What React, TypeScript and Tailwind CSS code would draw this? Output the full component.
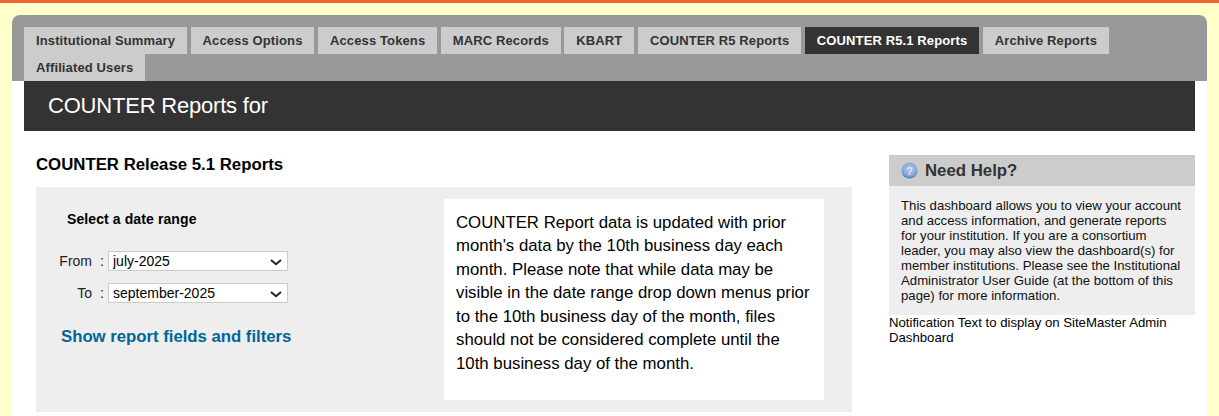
const sans = "font-['Liberation_Sans',Arial,sans-serif]";

const tabs = [
  "Institutional Summary",
  "Access Options",
  "Access Tokens",
  "MARC Records",
  "KBART",
  "COUNTER R5 Reports",
  "COUNTER R5.1 Reports",
  "Archive Reports",
  "Affiliated Users",
];

function HelpIcon() {
  return (
    <svg width="17" height="17" viewBox="0 0 17 17">
      <defs>
        <radialGradient id="helpBall" cx="50%" cy="40%" r="60%">
          <stop offset="0%" stopColor="#a9c2e6" />
          <stop offset="70%" stopColor="#8dabd8" />
          <stop offset="100%" stopColor="#4a78bb" />
        </radialGradient>
      </defs>
      <circle cx="8.5" cy="8.5" r="8" fill="url(#helpBall)" />
      <text x="8.5" y="12.5" textAnchor="middle" fontSize="11" fontWeight="700" fill="#dfe7f3" fontFamily="Liberation Sans">
        ?
      </text>
    </svg>
  );
}

function DateRow({ label, value, options }: { label: string; value: string; options: string[] }) {
  return (
    <div className="flex items-center h-[20px]">
      <span className="w-[56px] text-right text-[14px] text-[#222]">{label}</span>
      <span className="w-[16px] pl-[8px] text-[14px] text-[#222]">:</span>
      <div className="relative w-[180px] h-[20px]">
        <select
          defaultValue={value}
          className="block appearance-none w-full h-full bg-white border border-[#ccc] pl-[4px] text-[14px] leading-[18px] text-black"
        >
          {options.map((o) => (
            <option key={o}>{o}</option>
          ))}
        </select>
        <svg className="absolute right-[6px] top-[8px]" width="12" height="7" viewBox="0 0 12 7">
          <polyline points="1,1 6,5.2 11,1" fill="none" stroke="#222" strokeWidth="2" />
        </svg>
      </div>
    </div>
  );
}

export default function App() {
  const months = ["july-2025", "august-2025", "september-2025"];

  return (
    <div className={`${sans} h-[416px] overflow-hidden bg-[#ffffcc] border-t-[3px] border-[#f46233] px-[12px] pt-[12px]`}>
      <div className="bg-white rounded-t-[8px] overflow-hidden h-[500px]">
        <div className="bg-[#999] pt-[12px] px-[12px]">
          <ul className="flex flex-wrap gap-x-[3.5px]">
            {tabs.map((t) => (
              <li
                key={t}
                className={`h-[27px] px-[12px] text-[13px] font-bold leading-[27px] tracking-[0.12px] ${
                  t === "COUNTER R5.1 Reports" ? "bg-[#333] text-white" : "bg-[#ccc] text-[#333]"
                }`}
              >
                {t}
              </li>
            ))}
          </ul>
        </div>

        <div className="px-[12px]">
          <div className="bg-[#333] h-[50px] pl-[24px] text-[22px] leading-[50px] text-white tracking-[-0.2px]">
            COUNTER Reports for
          </div>

          <div className="flex justify-between pl-[12px] pt-[24px]">
            <div className="w-[816px]">
              <h2 className="text-[16.8px] font-bold leading-[18px] text-black mt-[1px] mb-[13px]">
                COUNTER Release 5.1 Reports
              </h2>
              <div className="bg-[#eee] h-[225px] flex p-[12px] pr-[28px] justify-between">
                <div className="pt-[13px]">
                  <div className="pl-[19px] text-[14px] font-bold leading-[14px] text-black tracking-[0.1px]">
                    Select a date range
                  </div>
                  <div className="mt-[25px] flex flex-col gap-[12px] ml-[-12px]">
                    <DateRow label="From" value="july-2025" options={months} />
                    <DateRow label="To" value="september-2025" options={months} />
                  </div>
                  <a className="block mt-[25px] pl-[13px] text-[16.8px] font-bold leading-[18px] text-[#006699] tracking-[-0.03px]">
                    Show report fields and filters
                  </a>
                </div>
                <div className="bg-white w-[380px] h-[201px] px-[12px] pt-[12px] text-[16.8px] leading-[23.45px] text-black">
                  COUNTER Report data is updated with prior month's data by the 10th business day each month. Please note that while data may be visible in the date range drop down menus prior to the 10th business day of the month, files should not be considered complete until the 10th business day of the month.
                </div>
              </div>
            </div>

            <aside className="w-[306px]">
              <div className="bg-[#ccc] h-[31px] flex items-center pl-[12px] gap-[7px] text-[16.8px] font-bold text-[#333]">
                <HelpIcon />
                Need Help?
              </div>
              <div className="bg-[#eee] h-[129px] px-[12px] pt-[12px] text-[13.2px] leading-[15px] text-[#111]">
                This dashboard allows you to view your account and access information, and generate reports for your institution. If you are a consortium leader, you may also view the dashboard(s) for member institutions. Please see the Institutional Administrator User Guide (at the bottom of this page) for more information.
              </div>
              <p className="text-[13.2px] leading-[15px] text-black">
                Notification Text to display on SiteMaster Admin Dashboard
              </p>
            </aside>
          </div>
        </div>
      </div>
    </div>
  );
}
